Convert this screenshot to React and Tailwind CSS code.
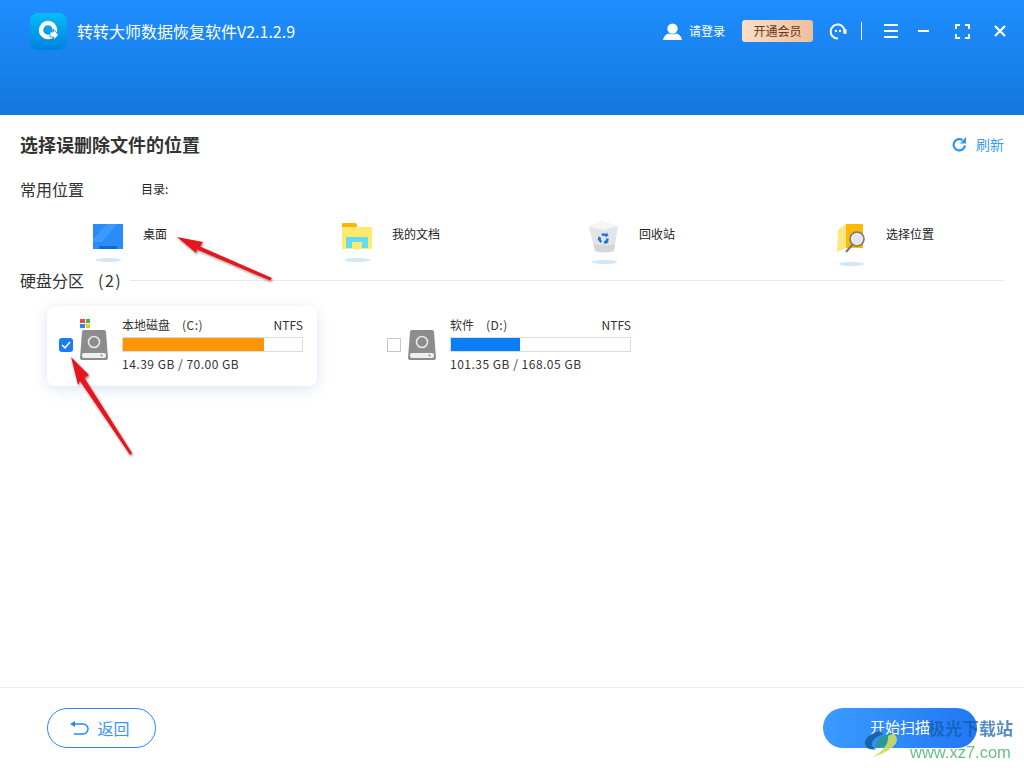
const cjk = { fontFamily: '"Noto Sans CJK SC", "Noto Sans", sans-serif' };

function DiskIcon() {
  return (
    <svg width="28" height="30" viewBox="0 0 28 30" className="shrink-0">
      <path d="M4 0h20a2 2 0 0 1 2 2l2 26a2 2 0 0 1-2 2H2a2 2 0 0 1-2-2L2 2a2 2 0 0 1 2-2z" fill="#8c8c8c" />
      <circle cx="14" cy="12" r="5.500" fill="none" stroke="#e8e8e8" strokeWidth="1.600" />
      <path d="M4 23h20a2 2 0 0 1 2 2v1a2 2 0 0 1-2 2H4a2 2 0 0 1-2-2v-1a2 2 0 0 1 2-2z" fill="#efefef" />
      <circle cx="21.500" cy="25.500" r="1" fill="#8c8c8c" />
    </svg>
  );
}

function DesktopIcon() {
  return (
    <svg width="30" height="25" viewBox="0 0 30 25">
      <rect width="30" height="25" fill="#2a8cf8" />
      <path d="M14 0h10L9 18H0v-3z" fill="#4ba2fb" opacity="0.6" />
      <rect x="6" y="22" width="18" height="3" fill="#0a6ad6" />
    </svg>
  );
}

function FolderIcon() {
  return (
    <svg width="30" height="26" viewBox="0 0 30 26">
      <path d="M0 1a1 1 0 0 1 1-1h12q2 0 2 2v3H0z" fill="#ffb400" />
      <rect y="4" width="30" height="22" fill="#ffe96e" />
      <path d="M4 25V15q0-1 1-1h20q1 0 1 1v10h-6v-6h-10v6z" fill="#62dcf5" />
    </svg>
  );
}

function BinIcon() {
  return (
    <svg width="30" height="32" viewBox="0 0 30 32">
      <path d="M0 6l12-6 17 5-4 25q-9 3-19 0z" fill="#e2e4e6" />
      <path d="M0 6l12-6 17 5-14 4z" fill="#f5f5f5" />
      <path d="M6 30q9 2.500 19 0l1-7q-10 3-21 0z" fill="#d4d6d8" />
      <circle cx="14.500" cy="17.500" r="4" fill="none" stroke="#1b78d8" strokeWidth="2.400" strokeDasharray="5.500 2.800" />
      <path d="M18 11.500l1.500 3.500-3.500.5zM20 21l-3.500 2-.5-3.500zM8.500 19.500l1-4 2.500 2.500z" fill="#1b78d8" />
    </svg>
  );
}

function PickIcon() {
  return (
    <svg width="28" height="30" viewBox="0 0 28 30">
      <path d="M9 0h17v24H9z" fill="#ffb900" />
      <path d="M1 6l8-6v24l-9 4z" fill="#ffe680" />
      <line x1="16" y1="20" x2="9" y2="28" stroke="#777" strokeWidth="2" />
      <circle cx="20" cy="15" r="7" fill="#e6e6e6" stroke="#777" strokeWidth="1.600" />
    </svg>
  );
}

const places = [
  { name: "桌面", icon: <DesktopIcon />, top: "pt-[6px]", gap: "mt-[9px]" },
  { name: "我的文档", icon: <FolderIcon />, top: "pt-[5px]", gap: "mt-[9px]" },
  { name: "回收站", icon: <BinIcon />, top: "pt-[3px]", gap: "mt-[7px]" },
  { name: "选择位置", icon: <PickIcon />, top: "pt-[6px]", gap: "mt-[8px]" },
];

function Place({ item }) {
  return (
    <div className="flex items-start">
      <div className={`w-[32px] flex flex-col items-center ${item.top}`}>
        {item.icon}
        <div className={`w-[25px] h-[4px] rounded-[50%] bg-[#cfe6fb] ${item.gap}`}></div>
      </div>
      <span className="ml-[19px] mt-[7px] text-[12px] leading-[18px] text-[#222]">{item.name}</span>
    </div>
  );
}

function DiskCard({ name, drive, used, pct, color, checked, sys }) {
  return (
    <div className={`w-[270px] h-[80px] rounded-[8px] flex items-center pl-[12px] pr-[14px] bg-white ${checked ? "shadow-[0_3px_14px_rgba(90,130,200,0.22)]" : ""}`}>
      {checked ? (
        <div className="w-[14px] h-[14px] mt-[-2px] rounded-[3px] bg-[#1a7cf2] flex items-center justify-center">
          <svg width="10" height="8" viewBox="0 0 10 8"><path d="M1 4l3 2.800L9 1" fill="none" stroke="#fff" strokeWidth="1.500" /></svg>
        </div>
      ) : (
        <div className="w-[14px] h-[14px] mt-[-2px] border border-[#c8c8c8] bg-white"></div>
      )}
      <div className="relative ml-[7px] mt-[-2px]">
        {sys && (
          <div className="absolute left-0 top-[-11px] grid grid-cols-2 gap-[1px] w-[10px]">
            <div className="h-[4px] bg-[#e8493a]"></div>
            <div className="h-[4px] bg-[#4caf50]"></div>
            <div className="h-[4px] bg-[#2b88e8]"></div>
            <div className="h-[4px] bg-[#fbc02d]"></div>
          </div>
        )}
        <DiskIcon />
      </div>
      <div className="ml-[14px] w-[181px] mt-[-4px]">
        <div className="flex text-[12px] leading-[16px] text-[#333]">
          <span>{name}</span>
          <span className="ml-[12px] tracking-[0.5px]">{drive}</span>
          <span className="ml-auto">NTFS</span>
        </div>
        <div className="mt-[4px] h-[15px] border border-[#dcdcdc] bg-white">
          <div className="h-full" style={{ width: pct + "%", background: color }}></div>
        </div>
        <div className="mt-[4px] text-[12px] leading-[16px] tracking-[0.5px] text-[#333]">{used}</div>
      </div>
    </div>
  );
}

export default function App() {
  return (
    <div className="relative w-[1024px] h-[768px] overflow-hidden bg-white flex flex-col" style={cjk}>
      {/* header */}
      <div className="h-[115px] shrink-0 bg-gradient-to-b from-[#1f8eff] to-[#1277de] text-white">
        <div className="h-[62px] flex items-center pl-[30px] pr-[18px]">
          <div className="w-[37px] h-[37px] rounded-[8px] bg-gradient-to-b from-[#0bbcf6] to-[#0080de] flex items-center justify-center">
            <svg width="22" height="22" viewBox="0 0 22 22">
              <circle cx="10" cy="10" r="7" fill="none" stroke="#fff" strokeWidth="4.500" />
              <path d="M12 12h3.500v-3l5 6-5 5v-3H12z" fill="#fff" stroke="#0a90e6" strokeWidth="0.800" />
            </svg>
          </div>
          <span className="ml-[10px] text-[16px]">转转大师数据恢复软件V2.1.2.9</span>

          <svg className="ml-auto" width="19" height="17" viewBox="0 0 20 18">
            <circle cx="10" cy="6" r="5.500" fill="#fff" />
            <path d="M0 18q1-6 6-7 4 2 8 0 5 1 6 7z" fill="#fff" />
          </svg>
          <span className="ml-[7px] text-[12px]">请登录</span>
          <div className="ml-[17px] w-[71px] h-[22px] rounded-[3px] bg-gradient-to-r from-[#f8dfc6] to-[#eebf9c] text-[#6a3414] text-[12px] flex items-center justify-center">开通会员</div>
          <svg className="ml-[16px]" width="18" height="18" viewBox="0 0 18 18">
            <path d="M15.500 11A7 7 0 1 0 9 16.500" fill="none" stroke="#fff" strokeWidth="2" />
            <rect x="14.500" y="7" width="3" height="5" rx="1" fill="#fff" />
            <circle cx="7" cy="9" r="1.200" fill="#fff" />
            <circle cx="11" cy="9" r="1.200" fill="#fff" />
          </svg>
          <div className="ml-[14px] w-[1px] h-[18px] bg-white"></div>
          <div className="ml-[22px] w-[14px] h-[14px] flex flex-col justify-between">
            <div className="h-[2px] bg-white"></div>
            <div className="h-[2px] bg-white"></div>
            <div className="h-[2px] bg-white"></div>
          </div>
          <div className="ml-[20px] w-[11px] h-[2px] bg-white"></div>
          <svg className="ml-[26px]" width="15" height="15" viewBox="0 0 15 15">
            <path d="M1 5V1h4M10 1h4v4M14 10v4h-4M5 14H1v-4" fill="none" stroke="#fff" strokeWidth="2" />
          </svg>
          <svg className="ml-[24px]" width="12" height="12" viewBox="0 0 12 12">
            <path d="M1 1l10 10M11 1L1 11" stroke="#fff" strokeWidth="2.200" />
          </svg>
        </div>
      </div>

      {/* body */}
      <div className="flex-1 px-[20px]">
        <div className="h-[58px] flex items-center justify-between">
          <h1 className="text-[18px] font-semibold text-[#333]">选择误删除文件的位置</h1>
          <div className="flex items-center text-[14px] text-[#3d9cf5]">
            <svg width="15" height="15" viewBox="0 0 15 15">
              <path d="M13 8.500A5.700 5.700 0 1 1 10.500 3" fill="none" stroke="#2a93f5" strokeWidth="2.200" />
              <path d="M14 0v6.500H8z" fill="#2a93f5" />
            </svg>
            <span className="ml-[9px]">刷新</span>
          </div>
        </div>
        <div className="mt-[1px] h-[30px] flex items-center">
          <span className="w-[121px] text-[16px] text-[#333]">常用位置</span>
          <span className="text-[12px] text-[#222]">目录:</span>
        </div>
        <div className="mt-[14px] h-[47px] grid grid-cols-[249px_247px_247px_1fr] pl-[72px]">
          {places.map((p) => (
            <Place key={p.name} item={p} />
          ))}
        </div>
        <div className="h-[30px] flex items-center">
          <span className="text-[16px] text-[#333]">硬盘分区</span>
          <span className="ml-[14px] w-[32px] text-[16px] tracking-[1.5px] text-[#333]">(2)</span>
          <div className="flex-1 h-[1px] bg-[#e9e9e9]"></div>
        </div>
        <div className="mt-[11px] pl-[27px] flex gap-[58px]">
          <DiskCard name="本地磁盘" drive="(C:)" used="14.39 GB / 70.00 GB" pct={78.500} color="#ff9500" checked sys />
          <DiskCard name="软件" drive="(D:)" used="101.35 GB / 168.05 GB" pct={38.500} color="#0a7dfb" />
        </div>
      </div>

      {/* footer */}
      <div className="h-[81px] shrink-0 border-t border-[#ebebeb] flex items-center justify-between pl-[47px] pr-[47px] pb-[1px]">
        <div className="w-[109px] h-[40px] pr-[4px] rounded-full border border-[#2a86f5] flex items-center justify-center text-[16px] text-[#3d94f5]">
          <svg width="20" height="14" viewBox="0 0 20 14">
            <path d="M3 3h11a4 4 0 0 1 0 10H5" fill="none" stroke="#2a86f5" strokeWidth="1.500" />
            <path d="M6 0v6L1 3z" fill="#2a86f5" />
          </svg>
          <span className="ml-[8px]">返回</span>
        </div>
        <div className="w-[154px] h-[40px] rounded-full bg-gradient-to-r from-[#3b9bff] to-[#2277f5] flex items-center justify-center text-[15px] text-white">开始扫描</div>
      </div>

      {/* annotation arrows */}
      <svg className="absolute inset-0 pointer-events-none" width="1024" height="768" viewBox="0 0 1024 768">
        <defs>
          <filter id="arrowShadow" x="-20%" y="-20%" width="140%" height="140%">
            <feDropShadow dx="1" dy="1.500" stdDeviation="1.200" floodColor="#000" floodOpacity="0.45" />
          </filter>
        </defs>
        <polygon points="177,237 203,242 200,246.500 272,278 270,280.500 197,249.500 196,253" fill="#e8141a" filter="url(#arrowShadow)" />
        <polygon points="71,357 89,375 84.500,378 132,453 130,455 80,381 78,385" fill="#e8141a" filter="url(#arrowShadow)" />
      </svg>

      {/* watermark */}
      <div className="absolute left-[864px] top-[717px] w-[160px] h-[50px] pointer-events-none">
        <svg className="absolute left-0 top-[14px]" width="40" height="27" viewBox="0 0 50 34">
          <path d="M20 0Q0 6 1 16q2 9 14 7Q6 18 12 11q4-5 12-7z" fill="#155f9f" opacity="0.9" />
          <path d="M14 18q6-13 24-16-8 5-9 10 0 7-11 9z" fill="#2a9d6a" opacity="0.8" />
          <path d="M38 3q8 9-3 18-8 7-25 12 22-12 20-27z" fill="#cfdc5a" opacity="0.9" />
        </svg>
        <span className="absolute left-[64px] top-[-3px] text-[17px] leading-[28px] font-bold text-[#0f5ca8] opacity-70 whitespace-nowrap">极光下载站</span>
        <span className="absolute left-[46px] top-[26px] text-[16.500px] leading-[18px] font-medium text-[#4cb56d] opacity-85 whitespace-nowrap" style={{ fontFamily: '"Liberation Sans", sans-serif' }}>www.xz7.com</span>
      </div>
    </div>
  );
}
